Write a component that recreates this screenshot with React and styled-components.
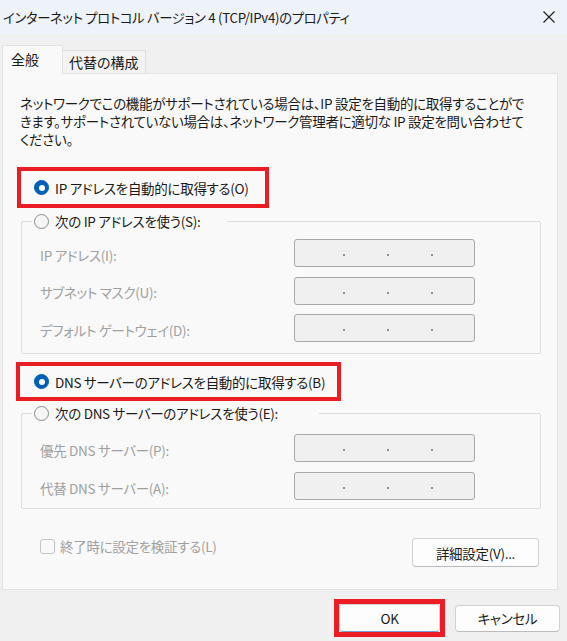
import React from "react";
import styled, { createGlobalStyle } from "styled-components";

const Global = createGlobalStyle`
  html, body { margin: 0; padding: 0; background: #f0f0f0; }
  * { box-sizing: border-box; }
`;

const Window = styled.div`
  width: 567px;
  height: 641px;
  overflow: hidden;
  background: #f0f0f0;
  font-family: "Noto Sans CJK JP", "Noto Sans", sans-serif;
  font-feature-settings: "palt";
  font-size: 13.5px;
  letter-spacing: -0.3px;
  color: #1a1a1a;
  display: flex;
  flex-direction: column;
`;

const TitleBar = styled.div`
  height: 34px;
  flex: none;
  background: #eef2f9;
  display: flex;
  align-items: center;
  justify-content: space-between;
  padding: 0 12px 0 3px;
`;

const Title = styled.span`
  font-size: 13.3px;
  white-space: nowrap;
`;

const Body = styled.div`
  padding: 11px 9px 0 2px;
  display: flex;
  flex-direction: column;
`;

const TabRow = styled.div`
  height: 29px;
  display: flex;
  align-items: flex-end;
  margin-bottom: -1px;
  position: relative;
  z-index: 1;
`;

const Tab = styled.div`
  width: ${(p) => p.$w}px;
  height: ${(p) => (p.$active ? 29 : 23)}px;
  margin-bottom: ${(p) => (p.$active ? 0 : 1)}px;
  background: ${(p) => (p.$active ? "#f9f9f9" : "#f3f3f3")};
  border: 1px solid ${(p) => (p.$active ? "#e3e3e3" : "#dedede")};
  border-bottom: none;
  border-left: ${(p) => (p.$active ? "1px solid #e3e3e3" : "none")};
  display: flex;
  align-items: ${(p) => (p.$active ? "flex-start" : "center")};
  padding: ${(p) => (p.$active ? "3px 0 0 8px" : "0 0 0 6px")};
  font-size: 14px;
  letter-spacing: 0;
  white-space: nowrap;
`;

const Panel = styled.div`
  width: 556px;
  height: 517px;
  border: 1px solid #e3e3e3;
  background: #f9f9f9;
  display: flex;
  flex-direction: column;
`;

const Description = styled.p`
  margin: 20px 0 0 17px;
  line-height: 18px;
  white-space: nowrap;
`;

const Highlight = styled.div`
  width: ${(p) => p.$w}px;
  height: ${(p) => p.$h}px;
  margin: ${(p) => p.$mt}px 0 0 ${(p) => p.$ml}px;
  border: ${(p) => p.$bw || 4}px solid #ea1c24;
  display: flex;
  align-items: center;
  padding-left: ${(p) => p.$pl || 0}px;
`;

const RadioRow = styled.label`
  display: flex;
  align-items: center;
  gap: 6px;
  line-height: 20px;
  height: 20px;
  white-space: nowrap;
`;

const RadioDot = styled.span`
  width: 15px;
  height: 15px;
  border-radius: 50%;
  flex: none;
  display: flex;
  align-items: center;
  justify-content: center;
  background: ${(p) => (p.$on ? "#005fb8" : "#f6f6f6")};
  border: 1px solid ${(p) => (p.$on ? "#005fb8" : "#8a8a8a")};
  &::after {
    content: "";
    width: 6px;
    height: 6px;
    border-radius: 50%;
    background: #ffffff;
    display: ${(p) => (p.$on ? "block" : "none")};
  }
`;

const Group = styled.fieldset`
  margin: ${(p) => p.$mt}px 0 0 18px;
  width: 520px;
  padding: 0;
  border: 1px solid #dddddd;
  border-radius: 2px;
  min-inline-size: 0;
`;

const Legend = styled.legend`
  margin-left: 10px;
  padding: 0 ${(p) => p.$pr}px 0 2px;
  height: 20px;
`;

const Fields = styled.div`
  display: grid;
  grid-template-columns: 254px 181px;
  grid-auto-rows: 28px;
  row-gap: ${(p) => p.$gap}px;
  align-items: center;
  padding: ${(p) => p.$pt}px 0 ${(p) => p.$pb}px 18px;
`;

const FieldLabel = styled.span`
  color: #a0a0a0;
  white-space: nowrap;
  padding-top: 3px;
`;

const IpBox = styled.div`
  height: 28px;
  border: 1px solid #a8a8a8;
  border-radius: 3px;
  background: #f0f0f0;
  display: flex;
  align-items: flex-end;
  padding: 0 0 10px 7px;
`;

const Octet = styled.span`
  width: 40px;
  flex: none;
`;

const Dot = styled.span`
  width: 2px;
  height: 2px;
  margin: 0 1px;
  flex: none;
  background: #8b8fa3;
`;

const BottomRow = styled.div`
  margin-top: 29px;
  padding: 0 18px 0 37px;
  display: flex;
  justify-content: space-between;
  align-items: flex-start;
`;

const CheckRow = styled.label`
  display: flex;
  align-items: center;
  gap: 5px;
  color: #a0a0a0;
  line-height: 18px;
  white-space: nowrap;
  margin-top: -1px;
`;

const CheckBox = styled.span`
  width: 15px;
  height: 15px;
  border: 1px solid #c4c4c4;
  border-radius: 3px;
  background: #f9f9f9;
  flex: none;
`;

const Button = styled.button`
  width: ${(p) => p.$w}px;
  height: ${(p) => p.$h}px;
  font: inherit;
  letter-spacing: inherit;
  color: #1a1a1a;
  background: #fdfdfd;
  border: 1px solid #d2d2d2;
  border-bottom-color: ${(p) => (p.$default ? "#6d9fd6" : "#bcbcbc")};
  border-radius: 4px;
  padding: 0;
  display: flex;
  align-items: center;
  justify-content: center;
  flex: none;
`;

const Footer = styled.div`
  margin-top: 9px;
  padding-right: 7px;
  display: flex;
  justify-content: flex-end;
  align-items: center;
  gap: 10px;
`;

const CloseIcon = () => (
  <svg width="12" height="12" viewBox="0 0 12 12">
    <path d="M0.5 0.5 L11.5 11.5 M11.5 0.5 L0.5 11.5" stroke="#1a1a1a" strokeWidth="1.1" fill="none" />
  </svg>
);

const IpField = () => (
  <IpBox>
    <Octet />
    <Dot />
    <Octet />
    <Dot />
    <Octet />
    <Dot />
    <Octet />
  </IpBox>
);

export default function App() {
  return (
    <>
      <Global />
      <Window>
        <TitleBar>
          <Title>インターネット プロトコル バージョン 4 (TCP/IPv4)のプロパティ</Title>
          <CloseIcon />
        </TitleBar>
        <Body>
          <TabRow>
            <Tab $active $w={61}>全般</Tab>
            <Tab $w={83}>代替の構成</Tab>
          </TabRow>
          <Panel>
            <Description>
              ネットワークでこの機能がサポートされている場合は、IP 設定を自動的に取得することがで
              <br />
              きます。サポートされていない場合は、ネットワーク管理者に適切な IP 設定を問い合わせて
              <br />
              ください。
            </Description>

            <Highlight $w={252} $h={41} $mt={19} $ml={14} $pl={13}>
              <RadioRow>
                <RadioDot $on />
                IP アドレスを自動的に取得する(O)
              </RadioRow>
            </Highlight>

            <Group $mt={3}>
              <Legend $pr={27}>
                <RadioRow>
                  <RadioDot />
                  次の IP アドレスを使う(S):
                </RadioRow>
              </Legend>
              <Fields $pt={8} $pb={11} $gap={9.5}>
                <FieldLabel>IP アドレス(I):</FieldLabel>
                <IpField />
                <FieldLabel>サブネット マスク(U):</FieldLabel>
                <IpField />
                <FieldLabel>デフォルト ゲートウェイ(D):</FieldLabel>
                <IpField />
              </Fields>
            </Group>

            <Highlight $w={325} $h={39} $mt={8} $ml={13} $pl={14}>
              <RadioRow>
                <RadioDot $on />
                DNS サーバーのアドレスを自動的に取得する(B)
              </RadioRow>
            </Highlight>

            <Group $mt={2}>
              <Legend $pr={41}>
                <RadioRow>
                  <RadioDot />
                  次の DNS サーバーのアドレスを使う(E):
                </RadioRow>
              </Legend>
              <Fields $pt={11} $pb={8} $gap={10}>
                <FieldLabel>優先 DNS サーバー(P):</FieldLabel>
                <IpField />
                <FieldLabel>代替 DNS サーバー(A):</FieldLabel>
                <IpField />
              </Fields>
            </Group>

            <BottomRow>
              <CheckRow>
                <CheckBox />
                終了時に設定を検証する(L)
              </CheckRow>
              <Button $w={127} $h={29}>詳細設定(V)...</Button>
            </BottomRow>
          </Panel>
        </Body>
        <Footer>
          <Highlight $w={111} $h={38} $mt={0} $ml={0} $bw={5}>
            <Button $w={101} $h={28} $default>OK</Button>
          </Highlight>
          <Button $w={105} $h={27}>キャンセル</Button>
        </Footer>
      </Window>
    </>
  );
}
